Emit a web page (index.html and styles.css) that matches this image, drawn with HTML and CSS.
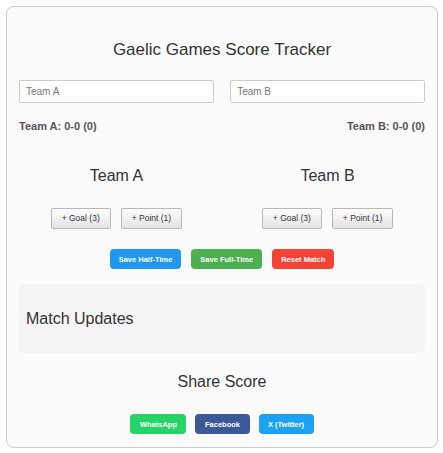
FILE: index.html
```html
<!DOCTYPE html>
<html lang="en">
<head>
  <meta charset="UTF-8">
  <meta name="viewport" content="width=device-width, initial-scale=1.0">
  <title>Gaelic Games Score Tracker</title>
  <link rel="stylesheet" href="styles.css">
</head>
<body>
  <div id="tracker">
    <h1 class="title">Gaelic Games Score Tracker</h1>

    <div class="team-inputs">
      <input type="text" id="team-a-name" placeholder="Team A">
      <input type="text" id="team-b-name" placeholder="Team B">
    </div>

    <div class="scores">
      <span id="score-a">Team A: 0-0 (0)</span>
      <span id="score-b">Team B: 0-0 (0)</span>
    </div>

    <div class="teams">
      <div class="team">
        <h2>Team A</h2>
        <div class="team-buttons">
          <button class="score-btn">+ Goal (3)</button>
          <button class="score-btn">+ Point (1)</button>
        </div>
      </div>
      <div class="team">
        <h2>Team B</h2>
        <div class="team-buttons">
          <button class="score-btn">+ Goal (3)</button>
          <button class="score-btn">+ Point (1)</button>
        </div>
      </div>
    </div>

    <div class="actions">
      <button class="action-btn half">Save Half-Time</button>
      <button class="action-btn full">Save Full-Time</button>
      <button class="action-btn reset">Reset Match</button>
    </div>

    <div class="updates">
      <h3>Match Updates</h3>
    </div>

    <h2 class="share-title">Share Score</h2>
    <div class="share">
      <button class="share-btn whatsapp">WhatsApp</button>
      <button class="share-btn facebook">Facebook</button>
      <button class="share-btn twitter">X (Twitter)</button>
    </div>
  </div>
</body>
</html>
```

FILE: styles.css
```css
body {
  margin: 0;
  padding: 6px 5px 6px 6px;
  background-color: #ffffff;
  color: #333333;
  font-family: "Liberation Sans", Arial, sans-serif;
}

#tracker {
  background-color: #fbfbfb;
  border: 1px solid #cccccc;
  border-radius: 8px;
  padding: 12px 12px 13px;
  display: flex;
  flex-direction: column;
}

.title {
  margin: 21px 0 0;
  font-size: 17px;
  font-weight: normal;
  line-height: 19px;
  text-align: center;
  color: #333333;
}

.team-inputs {
  display: flex;
  justify-content: space-between;
  margin-top: 21px;
}

.team-inputs input {
  width: 48%;
  box-sizing: border-box;
  padding: 5px 6px;
  font-family: inherit;
  font-size: 10px;
  line-height: 11px;
  border: 1px solid #cccccc;
  border-radius: 2px;
  background-color: #ffffff;
  color: #333333;
}

.team-inputs input::placeholder {
  color: #777777;
}

.scores {
  display: flex;
  justify-content: space-between;
  margin-top: 17px;
  font-size: 11px;
  font-weight: bold;
  line-height: 13px;
  color: #555555;
}

.teams {
  display: flex;
  justify-content: space-between;
  margin-top: 34px;
}

.team {
  width: 48%;
  display: flex;
  flex-direction: column;
  align-items: center;
}

.team h2 {
  margin: 0;
  font-size: 16px;
  font-weight: normal;
  line-height: 18px;
  color: #333333;
}

.team-buttons {
  display: flex;
  gap: 10px;
  margin-top: 23px;
}

.score-btn {
  padding: 5px 10px;
  font-family: inherit;
  font-size: 8.5px;
  line-height: 9px;
  color: #333333;
  background: linear-gradient(#fdfdfd, #e4e4e4);
  border: 1px solid #b8b8b8;
  border-radius: 2px;
}

.actions {
  display: flex;
  justify-content: center;
  gap: 10px;
  margin-top: 20px;
}

.action-btn,
.share-btn {
  height: 20px;
  padding: 0 9px;
  font-family: inherit;
  font-size: 7.5px;
  font-weight: bold;
  color: #ffffff;
  border: none;
  border-radius: 4px;
}

.half { background-color: #2196f3; }
.full { background-color: #4caf50; }
.reset { background-color: #f44336; }

.updates {
  margin-top: 15px;
  padding: 26px 7px 25px;
  background-color: #f5f5f5;
  border-radius: 5px;
}

.updates h3 {
  margin: 0;
  font-size: 16px;
  font-weight: normal;
  line-height: 18px;
  color: #333333;
}

.share-title {
  margin: 20px 0 0;
  font-size: 16px;
  font-weight: normal;
  line-height: 18px;
  text-align: center;
  color: #333333;
}

.share {
  display: flex;
  justify-content: center;
  gap: 9px;
  margin-top: 23px;
}

.share-btn {
  padding: 0 9.5px;
}

.whatsapp { background-color: #25d366; }
.facebook { background-color: #3b5998; }
.twitter { background-color: #1da1f2; }
```
